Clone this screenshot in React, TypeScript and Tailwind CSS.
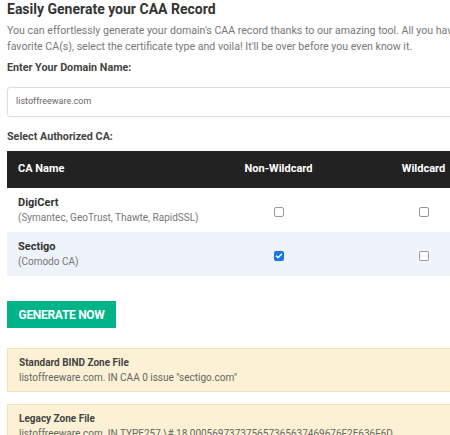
import { Check } from "lucide-react";

const rows = [
  { name: "DigiCert", sub: "(Symantec, GeoTrust, Thawte, RapidSSL)", nw: false, w: false, alt: false },
  { name: "Sectigo", sub: "(Comodo CA)", nw: true, w: false, alt: true },
];

function Box({ checked }: { checked: boolean }) {
  if (checked)
    return (
      <span className="flex h-[10px] w-[10px] items-center justify-center rounded-[2px] bg-[#1a73e8]">
        <Check className="h-[8px] w-[8px] text-white" strokeWidth={4} />
      </span>
    );
  return <span className="block h-[10px] w-[10px] rounded-[2px] border border-[#9a9a9a] bg-white" />;
}

export default function App() {
  return (
    <div className="h-[435px] w-[450px] overflow-hidden bg-white" style={{ fontFamily: "Roboto, 'Liberation Sans', sans-serif" }}>
      <div className="w-[640px] pl-[7px]">
        <h1 className="text-[14px] font-bold leading-[18px] text-[#333]">Easily Generate your CAA Record</h1>
        <p className="mt-[5px] text-[10.6px] leading-[16px] text-[#777]">
          You can effortlessly generate your domain's CAA record thanks to our amazing tool. All you have to do is choose your
          <br />
          favorite CA(s), select the certificate type and voila! It'll be over before you even know it.
        </p>
        <div className="mt-[5px] text-[10.75px] font-bold leading-[16px] text-[#444]">Enter Your Domain Name:</div>
        <div className="mt-[11px] flex h-[30px] items-center rounded-[3px] border border-[#dedede] px-[8px] text-[9px] text-[#666]">
          listoffreeware.com
        </div>
        <div className="mt-[12px] text-[10.75px] font-bold leading-[16px] text-[#444]">Select Authorized CA:</div>
        <div className="mt-[6px] w-[489px]">
          <div className="grid h-[37px] grid-cols-[199px_145px_145px] items-center bg-[#222] text-[11px] font-bold text-white">
            <div className="pl-[11px]">CA Name</div>
            <div className="text-center">Non-Wildcard</div>
            <div className="text-center">Wildcard</div>
          </div>
          {rows.map((r) => (
            <div
              key={r.name}
              className={`grid h-[44px] grid-cols-[199px_145px_145px] items-center ${r.alt ? "bg-[#edf3f9]" : "bg-white"}`}
            >
              <div className="pl-[11px] leading-[15px]">
                <div className="text-[11px] font-bold text-[#333]">{r.name}</div>
                <div className="text-[10px] text-[#777]">{r.sub}</div>
              </div>
              <div className="flex justify-center pt-[3px]">
                <Box checked={r.nw} />
              </div>
              <div className="flex justify-center pt-[3px]">
                <Box checked={r.w} />
              </div>
            </div>
          ))}
        </div>
        <button className="mt-[25px] flex h-[27px] w-[109px] items-center justify-center bg-[#00b48a] text-[12px] font-bold tracking-[-0.3px] text-white">
          GENERATE NOW
        </button>
        <div className="mt-[20px] flex flex-col gap-[12px]">
          <div className="h-[44px] border border-[#f3e3b5] bg-[#fcf1d4] px-[11px] pt-[6px] text-[10px] leading-[15px]">
            <div className="font-bold text-[#444]">Standard BIND Zone File</div>
            <div className="text-[#666]">listoffreeware.com. IN CAA 0 issue "sectigo.com"</div>
          </div>
          <div className="h-[44px] border border-[#f3e3b5] bg-[#fcf1d4] px-[11px] pt-[6px] text-[10px] leading-[15px]">
            <div className="font-bold text-[#444]">Legacy Zone File</div>
            <div className="text-[#666]">listoffreeware.com. IN TYPE257 \# 18 000569737375657365637469676F2E636F6D</div>
          </div>
        </div>
      </div>
    </div>
  );
}
